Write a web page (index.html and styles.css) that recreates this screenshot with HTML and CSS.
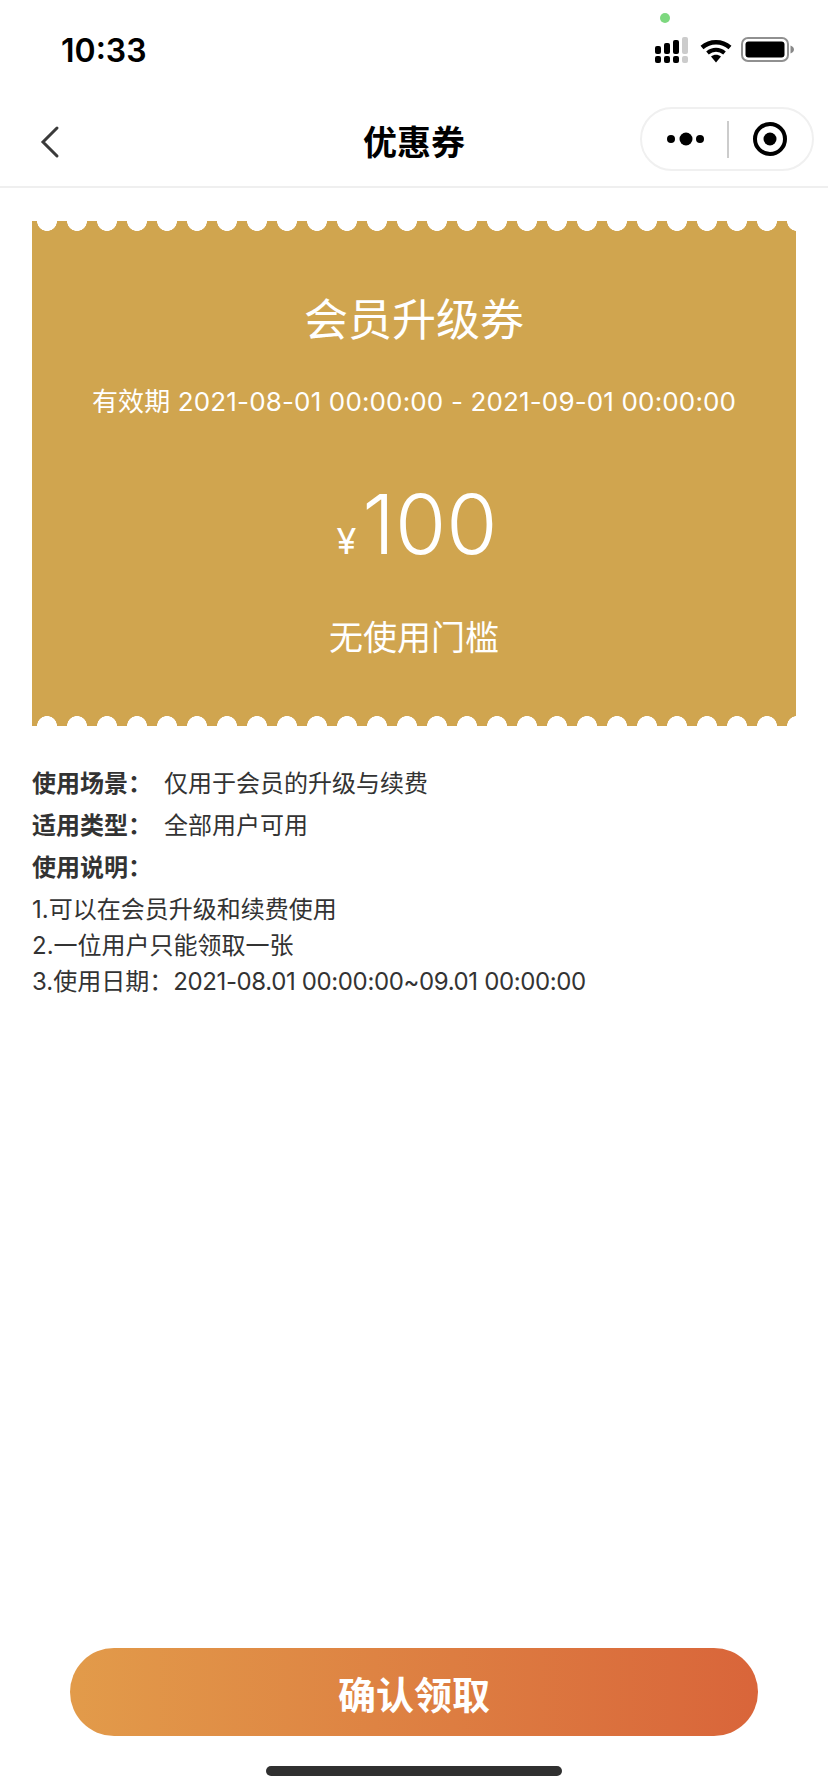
FILE: index.html
```html
<!DOCTYPE html>
<html lang="zh-CN">
<head>
  <meta charset="UTF-8">
  <title>优惠券</title>
  <link rel="stylesheet" href="styles.css">
</head>
<body>
<div class="page">
  <div class="status-bar">
    <span class="time">10:33</span>
    <span class="camera-dot"></span>
    <div class="status-icons">
      <svg class="signal" width="34" height="26" viewBox="0 0 34 26">
        <rect x="1" y="9" width="6" height="8" rx="2" fill="#000"/>
        <rect x="10" y="6" width="6" height="11" rx="2" fill="#000"/>
        <rect x="19" y="3" width="6" height="14" rx="2" fill="#000"/>
        <rect x="28" y="0" width="6" height="17" rx="2" fill="#ccc"/>
        <rect x="1" y="19" width="6" height="7" rx="2" fill="#000"/>
        <rect x="10" y="19" width="6" height="7" rx="2" fill="#000"/>
        <rect x="19" y="19" width="6" height="7" rx="2" fill="#000"/>
        <rect x="28" y="19" width="6" height="7" rx="2" fill="#ccc"/>
      </svg>
      <svg class="wifi" width="32" height="25" viewBox="0 0 32 25">
        <path d="M2 9.5C10 2.5 22 2.5 30 9.5" fill="none" stroke="#000" stroke-width="4.4"/>
        <path d="M7.5 15C12.5 10.8 19.5 10.8 24.5 15" fill="none" stroke="#000" stroke-width="4"/>
        <path d="M11 18.4C14 16.3 18 16.3 21 18.4L16 24.5Z" fill="#000"/>
      </svg>
      <svg class="battery" width="53" height="26" viewBox="0 0 53 26">
        <rect x="1" y="1" width="46" height="23" rx="6" fill="none" stroke="#909090" stroke-width="2"/>
        <rect x="4.500" y="4.500" width="39" height="16" rx="3" fill="#000"/>
        <path d="M49.500 8.500C51.500 9.200 53 10.500 53 12.500C53 14.500 51.500 15.800 49.500 16.500Z" fill="#888"/>
      </svg>
    </div>
  </div>

  <div class="nav-bar">
    <svg class="back-icon" width="20" height="34" viewBox="0 0 20 34">
      <path d="M17 3L3 17L17 31" fill="none" stroke="#3a3a3a" stroke-width="3" stroke-linecap="round" stroke-linejoin="miter"/>
    </svg>
    <h1 class="nav-title">优惠券</h1>
    <div class="capsule">
      <svg class="capsule-more" width="40" height="14" viewBox="0 0 40 14">
        <circle cx="5" cy="7" r="4" fill="#000"/>
        <circle cx="20" cy="7" r="6.500" fill="#000"/>
        <circle cx="34" cy="7" r="4" fill="#000"/>
      </svg>
      <span class="capsule-line"></span>
      <svg class="capsule-close" width="36" height="36" viewBox="0 0 36 36">
        <circle cx="18" cy="18" r="15" fill="none" stroke="#000" stroke-width="4"/>
        <circle cx="18" cy="18" r="6.500" fill="#000"/>
      </svg>
    </div>
  </div>

  <div class="coupon">
    <div class="coupon-name">会员升级券</div>
    <div class="coupon-date">有效期 2021-08-01 00:00:00 - 2021-09-01 00:00:00</div>
    <div class="coupon-price"><span class="yen">¥</span><span class="amount">100</span></div>
    <div class="coupon-limit">无使用门槛</div>
  </div>

  <div class="info">
    <div class="info-row"><b>使用场景：</b><span>仅用于会员的升级与续费</span></div>
    <div class="info-row"><b>适用类型：</b><span>全部用户可用</span></div>
    <div class="info-row"><b>使用说明：</b></div>
    <div class="info-text">
      <p>1.可以在会员升级和续费使用</p>
      <p>2.一位用户只能领取一张</p>
      <p>3.使用日期：<span class="info-date">2021-08.01 00:00:00~09.01 00:00:00</span></p>
    </div>
  </div>

  <button class="confirm-button">确认领取</button>
  <div class="home-bar"></div>
</div>
</body>
</html>
```

FILE: styles.css
```css
* {
  box-sizing: border-box;
}
body {
  margin: 0;
  background: #fff;
  font-family: Inter, "Noto Sans CJK SC", sans-serif;
  color: #333;
}
.page {
  position: relative;
  display: flex;
  flex-direction: column;
  height: 1792px;
  overflow: hidden;
}
.status-bar {
  display: flex;
  align-items: center;
  justify-content: space-between;
  height: 100px;
  padding: 0 34px 0 61px;
}
.time {
  font-size: 32px;
  font-weight: 600;
  color: #000;
}
.camera-dot {
  position: absolute;
  left: 660px;
  top: 13px;
  width: 10px;
  height: 10px;
  border-radius: 50%;
  background: #7dd87f;
}
.status-icons {
  display: flex;
  align-items: center;
  gap: 9px;
}
.signal {
  margin-right: 3px;
}
.nav-bar {
  position: relative;
  display: flex;
  align-items: center;
  justify-content: space-between;
  height: 88px;
  padding: 0 14px 8px 40px;
  border-bottom: 2px solid #efefef;
}
.back-icon {
  margin-top: 5px;
}
.nav-title {
  position: absolute;
  left: 0;
  right: 0;
  margin: 0;
  padding-top: 2px;
  text-align: center;
  font-size: 34px;
  font-weight: 700;
  color: #000;
}
.capsule {
  display: flex;
  align-items: center;
  width: 174px;
  height: 64px;
  padding-left: 24px;
  border: 2px solid #f0f0f0;
  border-radius: 32px;
}
.capsule-line {
  width: 2px;
  height: 37px;
  margin: 0 23px 0 21px;
  background: #ccc;
}
.coupon {
  position: relative;
  display: flex;
  flex-direction: column;
  align-items: center;
  height: 505px;
  margin: 33px 32px 0;
  background: #d0a54f;
  color: #fff;
}
.coupon::before,
.coupon::after {
  content: "";
  position: absolute;
  left: 0;
  right: 0;
  height: 10px;
  background-image: radial-gradient(circle at 15px 0, #fff 9.600px, transparent 10.200px);
  background-size: 30px 10px;
  background-repeat: repeat-x;
}
.coupon::before {
  top: 0;
}
.coupon::after {
  bottom: 0;
  background-image: radial-gradient(circle at 15px 10px, #fff 9.600px, transparent 10.200px);
}
.coupon-name {
  margin-top: 67px;
  font-size: 44px;
  line-height: 64px;
}
.coupon-date {
  margin-top: 32px;
  font-size: 26px;
  line-height: 36px;
  letter-spacing: .15px;
}
.coupon-price {
  display: flex;
  align-items: baseline;
  margin-top: 52px;
  padding-left: 6px;
  line-height: 104px;
}
.yen {
  margin-right: 6px;
  font-size: 36px;
}
.amount {
  font-size: 83px;
  font-weight: 300;
}
.coupon-limit {
  margin-top: 20px;
  font-size: 34px;
  line-height: 50px;
}
.info {
  margin: 37px 32px 0;
  font-size: 24px;
}
.info-row {
  display: flex;
  height: 42px;
  line-height: 42px;
}
.info-row b {
  width: 132px;
  font-weight: 700;
}
.info-text {
  margin-top: 3px;
}
.info-text p {
  margin: 0;
  line-height: 36px;
}
.info-date {
  letter-spacing: -.37px;
}
.confirm-button {
  width: 688px;
  height: 88px;
  margin: auto 0 0 70px;
  border: none;
  border-radius: 44px;
  background: linear-gradient(to right, #e29b4a, #d9653a);
  color: #fff;
  font-family: inherit;
  font-size: 38px;
  font-weight: 700;
}
.home-bar {
  width: 296px;
  height: 10px;
  margin: 30px 0 16px 266px;
  border-radius: 5px;
  background: #303030;
}
```
